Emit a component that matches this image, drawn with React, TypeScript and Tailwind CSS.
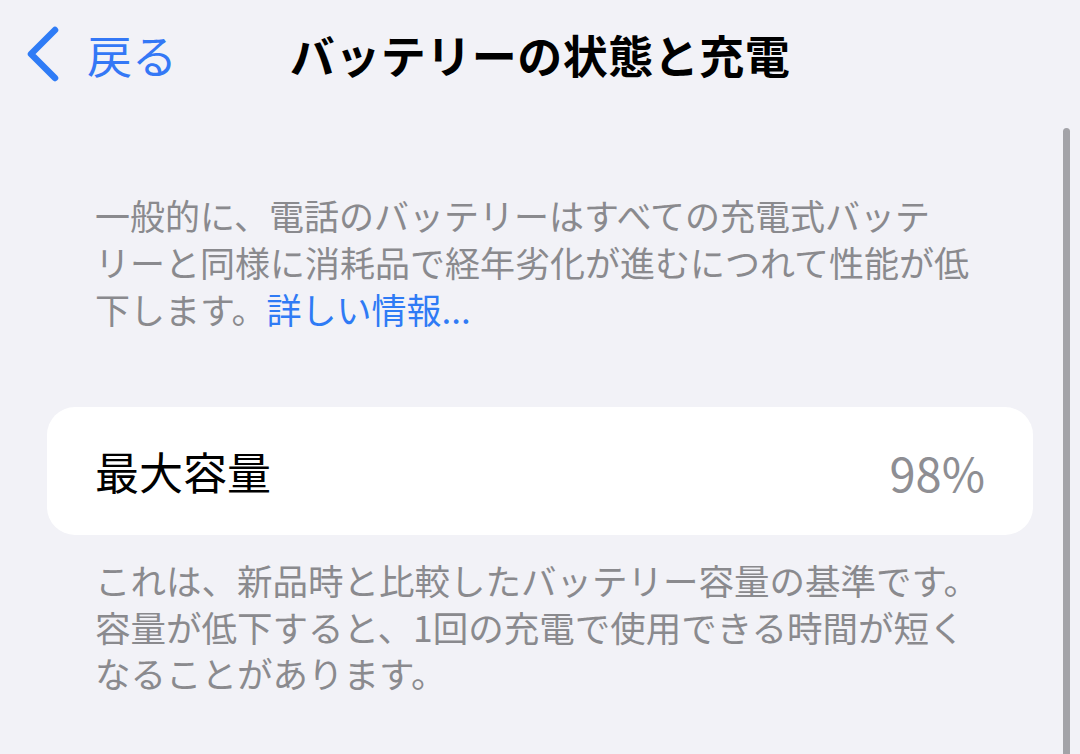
const font = { fontFamily: '"Noto Sans CJK JP", "Noto Sans", sans-serif' };

const introLines = [
  "一般的に、電話のバッテリーはすべての充電式バッテ",
  "リーと同様に消耗品で経年劣化が進むにつれて性能が低",
];

const footerLines = [
  "これは、新品時と比較したバッテリー容量の基準です。",
  "容量が低下すると、1回の充電で使用できる時間が短く",
  "なることがあります。",
];

function BackChevron() {
  return (
    <svg width="34" height="56" viewBox="0 0 34 56" fill="none" className="shrink-0">
      <polyline
        points="29,4 5,28 29,52"
        stroke="#2f7cf6"
        strokeWidth="6.5"
        strokeLinecap="round"
        strokeLinejoin="round"
      />
    </svg>
  );
}

export default function App() {
  return (
    <main className="relative h-[754px] w-[1080px] overflow-hidden bg-[#f2f2f7]" style={font}>
      <header className="grid h-[108px] grid-cols-[1fr_auto_1fr] items-center">
        <div className="flex items-center gap-[27px] pl-[26px] text-[#3478f6]">
          <BackChevron />
          <span className="text-[45px] leading-none">戻る</span>
        </div>
        <h1 className="text-[45px] font-bold leading-none tracking-[0.5px] text-black">
          バッテリーの状態と充電
        </h1>
        <div />
      </header>

      <section className="px-[47px] pt-[83px]">
        <p className="px-[48px] text-[35px] leading-[47px] text-[#8a8a8e]">
          {introLines.map((line) => (
            <span key={line} className="block whitespace-nowrap">
              {line}
            </span>
          ))}
          <span className="block whitespace-nowrap">
            下します。<span className="text-[#2f7bf5]">詳しい情報...</span>
          </span>
        </p>

        <div className="mt-[75px] flex h-[128px] items-center justify-between rounded-[28px] bg-white px-[48px]">
          <span className="text-[44px] leading-none text-black">最大容量</span>
          <span className="text-[47px] leading-none text-[#8e8e93]">98%</span>
        </div>

        <p className="mt-[22px] px-[48px] text-[35.5px] leading-[46.5px] text-[#8a8a8e]">
          {footerLines.map((line) => (
            <span key={line} className="block whitespace-nowrap">
              {line}
            </span>
          ))}
        </p>
      </section>

      <div className="absolute right-[10px] top-[128px] h-[640px] w-[7px] rounded-full bg-[#a3a3a8]" />
    </main>
  );
}
